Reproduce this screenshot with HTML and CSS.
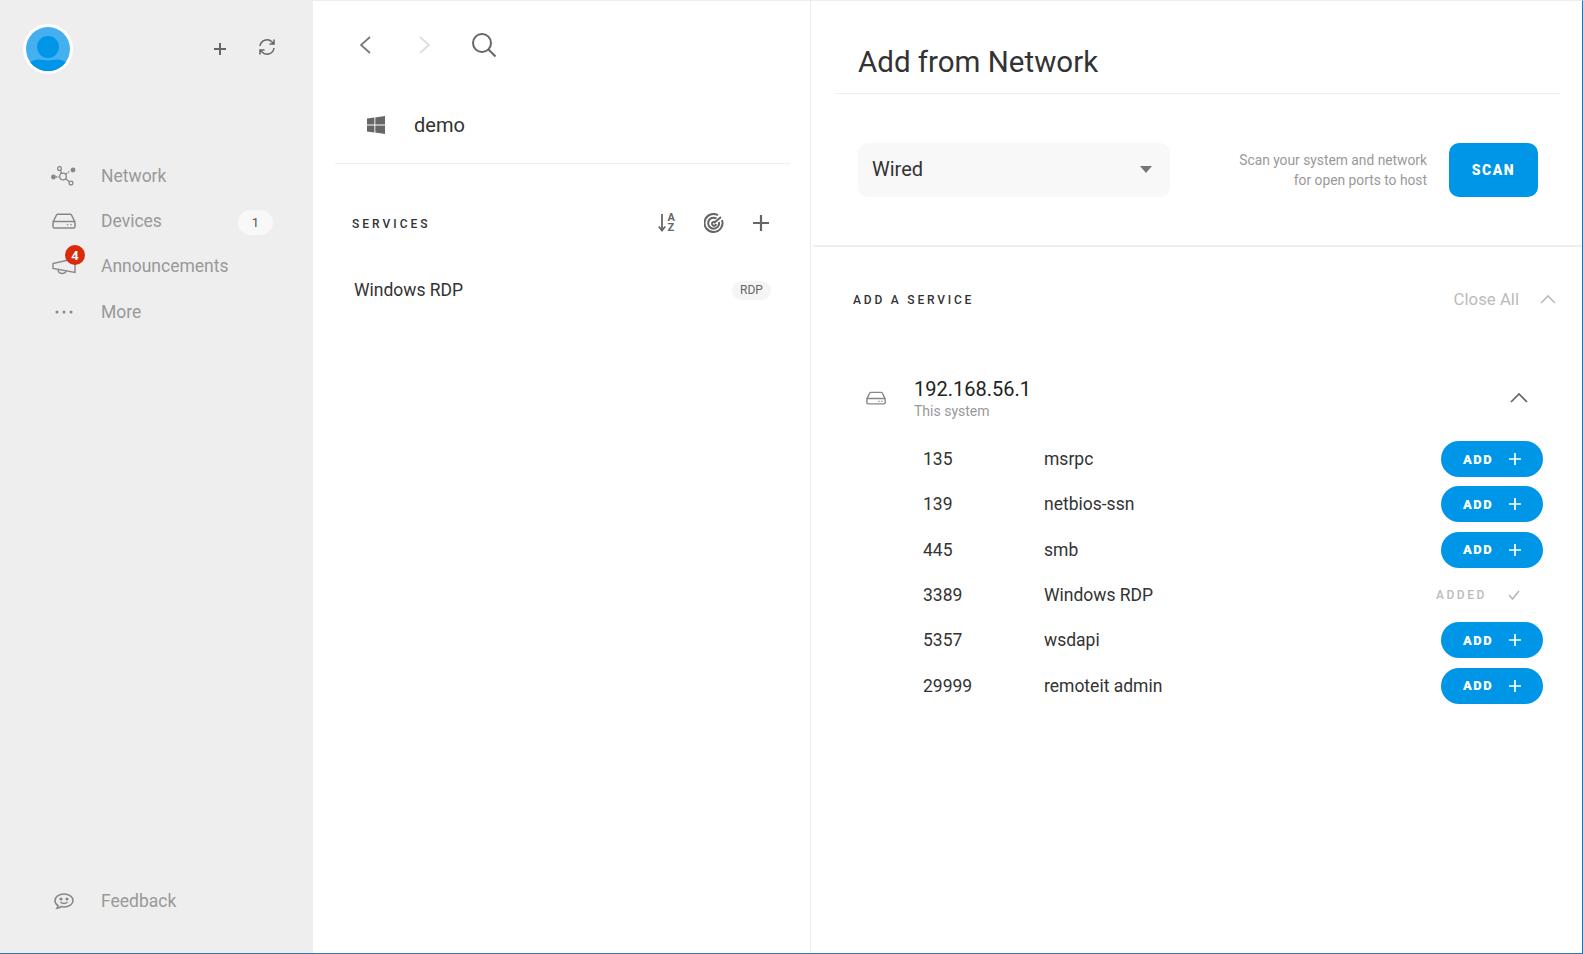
FILE: index.html
```html
<!DOCTYPE html>
<html lang="en">
<head>
<meta charset="utf-8">
<title>Add from Network</title>
<link rel="stylesheet" href="styles.css">
</head>
<body>
<div class="app">
  <aside class="sidebar">
    <div class="side-top">
      <div class="avatar">
        <svg viewBox="0 0 44 44" width="44" height="44"><circle cx="22" cy="22" r="22" fill="#45b0f0"/><circle cx="22" cy="20" r="11" fill="#0096e7"/><path d="M4 35c5-3 10-3 14-2 3 .6 5 .6 8 0 4-1 9-1 14 2a22 22 0 0 1-36 0z" fill="#0096e7"/></svg>
      </div>
      <div class="side-actions">
        <svg class="ic-plus" viewBox="0 0 14 14" width="14" height="14"><path d="M7 1v12M1 7h12" stroke="#666" stroke-width="2"/></svg>
        <svg viewBox="0 0 18 18" width="18" height="18" fill="none" stroke="#666" stroke-width="1.500"><path d="M2 8a7 7 0 0 1 12-4l2 2M16 1.500V6h-4.500M16 10a7 7 0 0 1-12 4l-2-2M2 16.500V12h4.500"/></svg>
      </div>
    </div>
    <nav class="nav">
      <div class="nav-row">
        <span class="nav-ic"><svg viewBox="0 0 26 20" width="26" height="20" fill="none" stroke="#888" stroke-width="1.300"><circle cx="2.500" cy="11" r="1.800" fill="#888"/><path d="M5 11h3" stroke-dasharray="1.500 1"/><circle cx="12" cy="10.500" r="3.300"/><circle cx="8.500" cy="2.500" r="1.900"/><path d="M9.500 4.500l1 3M14.500 12.500l3.500 3"/><circle cx="20" cy="17" r="1.900"/><path d="M15 8l4-3" stroke-dasharray="1.500 1"/><circle cx="22" cy="4" r="1.800" fill="#888"/></svg></span>
        <span class="nav-label">Network</span>
      </div>
      <div class="nav-row">
        <span class="nav-ic"><svg viewBox="0 0 24 16" width="24" height="16" fill="none" stroke="#888" stroke-width="1.500"><path d="M1 9l3.500-7a1.500 1.500 0 0 1 1.300-.8h12.400a1.500 1.500 0 0 1 1.300.8L23 9"/><rect x="1" y="8.500" width="22" height="6.500" rx="1.500"/><circle cx="15.500" cy="11.800" r=".8" fill="#888" stroke="none"/><circle cx="19" cy="11.800" r=".8" fill="#888" stroke="none"/></svg></span>
        <span class="nav-label">Devices</span>
        <span class="count">1</span>
      </div>
      <div class="nav-row">
        <span class="nav-ic"><svg viewBox="0 0 24 18" width="24" height="18" fill="none" stroke="#888" stroke-width="1.400"><path d="M1 6.500v5l22 4V1.500zM6 12.500c0 5 8 5 8 1.500"/></svg><span class="badge">4</span></span>
        <span class="nav-label">Announcements</span>
      </div>
      <div class="nav-row">
        <span class="nav-ic"><svg viewBox="0 0 18 4" width="18" height="4" fill="#888"><circle cx="2" cy="2" r="1.500"/><circle cx="9" cy="2" r="1.500"/><circle cx="16" cy="2" r="1.500"/></svg></span>
        <span class="nav-label">More</span>
      </div>
    </nav>
    <div class="nav-row feedback">
      <span class="nav-ic"><svg viewBox="0 0 20 18" width="20" height="18" fill="none" stroke="#888" stroke-width="1.600"><path d="M4 13.500C2 12.300 1 10.700 1 8.700 1 4.700 5 2 10 2s9 2.700 9 6.500-4 6.500-9 6.500c-1 0-2-.1-3-.4-1 1-2.500 1.600-4 1.700.6-.8 1-1.700 1-2.800z"/><circle cx="7" cy="7" r=".8" fill="#888"/><circle cx="13" cy="7" r=".8" fill="#888"/><path d="M6.500 10c1.800 2 5.200 2 7 0"/></svg></span>
      <span class="nav-label">Feedback</span>
    </div>
  </aside>

  <section class="middle">
    <div class="mid-nav">
      <svg class="back" viewBox="0 0 14 20" width="14" height="20" fill="none" stroke="#777" stroke-width="1.700"><path d="M12 2L3 10l9 8"/></svg>
      <svg class="fwd" viewBox="0 0 14 20" width="14" height="20" fill="none" stroke="#ddd" stroke-width="1.700"><path d="M2 2l9 8-9 8"/></svg>
      <svg class="search" viewBox="0 0 26 26" width="26" height="26" fill="none" stroke="#666" stroke-width="2"><circle cx="11" cy="11" r="9"/><path d="M17.500 17.500l7 7"/></svg>
    </div>
    <div class="device">
      <svg class="win" viewBox="0 0 18 18" width="18" height="18" fill="#666"><path d="M0 2.600l7.400-1v7H0zM8.300 1.400L18 0v8.600H8.300zM0 9.400h7.400v7L0 15.400zM8.300 9.400H18V18l-9.700-1.400z"/></svg>
      <span class="device-name">demo</span>
    </div>
    <div class="svc-head">
      <span class="caps caps-svc">SERVICES</span>
      <div class="svc-tools">
        <span class="tool sort"><svg viewBox="0 0 8 18" width="8" height="18" fill="none" stroke="#666" stroke-width="1.800"><path d="M4 0v16M.8 12.500L4 16.500l3.200-4"/></svg><span class="sort-az">A<br>Z</span></span>
        <span class="tool"><svg viewBox="0 0 20 20" width="20" height="20" fill="none" stroke="#666" stroke-width="2"><path d="M14 2.200A9 9 0 1 0 18 7"/><path d="M12.500 5.500A5.500 5.500 0 1 0 15 9"/><path d="M11 9a2 2 0 1 0 1 2M10 10l7-6"/></svg></span>
        <span class="tool"><svg viewBox="0 0 16 16" width="16" height="16"><path d="M8 0v16M0 8h16" stroke="#666" stroke-width="2.200"/></svg></span>
      </div>
    </div>
    <div class="svc-row">
      <span class="svc-name">Windows RDP</span>
      <span class="chip">RDP</span>
    </div>
  </section>

  <section class="right">
    <div class="r-title"><h1>Add from Network</h1></div>
    <div class="scan-bar">
      <div class="select"><span>Wired</span><i class="caret"></i></div>
      <p class="scan-note">Scan your system and network<br>for open ports to host</p>
      <button class="scan-btn">SCAN</button>
    </div>
    <div class="add-head">
      <span class="caps caps-wide">ADD A SERVICE</span>
      <div class="close-all">
        <span>Close All</span>
        <svg viewBox="0 0 16 10" width="16" height="10" fill="none" stroke="#bbb" stroke-width="1.600"><path d="M1 9l7-7 7 7"/></svg>
      </div>
    </div>
    <div class="host">
      <svg class="host-ic" viewBox="0 0 24 16" width="20" height="14" fill="none" stroke="#888" stroke-width="1.700"><path d="M1 9l3.500-7a1.500 1.500 0 0 1 1.300-.8h12.400a1.500 1.500 0 0 1 1.300.8L23 9"/><rect x="1" y="8.500" width="22" height="6.500" rx="1.500"/><circle cx="15.500" cy="11.800" r=".9" fill="#888" stroke="none"/><circle cx="19" cy="11.800" r=".9" fill="#888" stroke="none"/></svg>
      <div class="host-text">
        <div class="host-ip">192.168.56.1</div>
        <div class="host-sub">This system</div>
      </div>
      <svg class="host-chev" viewBox="0 0 18 11" width="18" height="11" fill="none" stroke="#666" stroke-width="1.700"><path d="M1 10l8-8 8 8"/></svg>
    </div>
    <div class="ports">
      <div class="port"><span class="num">135</span><span class="pname">msrpc</span><button class="add">ADD<svg viewBox="0 0 14 14" width="14" height="14"><path d="M7 1v12M1 7h12" stroke="#fff" stroke-width="1.700"/></svg></button></div>
      <div class="port"><span class="num">139</span><span class="pname">netbios-ssn</span><button class="add">ADD<svg viewBox="0 0 14 14" width="14" height="14"><path d="M7 1v12M1 7h12" stroke="#fff" stroke-width="1.700"/></svg></button></div>
      <div class="port"><span class="num">445</span><span class="pname">smb</span><button class="add">ADD<svg viewBox="0 0 14 14" width="14" height="14"><path d="M7 1v12M1 7h12" stroke="#fff" stroke-width="1.700"/></svg></button></div>
      <div class="port"><span class="num">3389</span><span class="pname">Windows RDP</span><span class="added">ADDED<svg viewBox="0 0 12 10" width="12" height="10" fill="none" stroke="#aaa" stroke-width="1.200"><path d="M1 5l3.500 4L11 1"/></svg></span></div>
      <div class="port"><span class="num">5357</span><span class="pname">wsdapi</span><button class="add">ADD<svg viewBox="0 0 14 14" width="14" height="14"><path d="M7 1v12M1 7h12" stroke="#fff" stroke-width="1.700"/></svg></button></div>
      <div class="port"><span class="num">29999</span><span class="pname">remoteit admin</span><button class="add">ADD<svg viewBox="0 0 14 14" width="14" height="14"><path d="M7 1v12M1 7h12" stroke="#fff" stroke-width="1.700"/></svg></button></div>
    </div>
  </section>
</div>
</body>
</html>
```
FILE: styles.css
```css
* { box-sizing: border-box; }
html, body { margin: 0; height: 100%; overflow: hidden; }
body { font-family: Roboto, "Liberation Sans", sans-serif; color: #222; background: #fff; }
.app {
  display: flex;
  height: 954px;
  border-top: 1px solid #eee;
  border-bottom: 1px solid #2f78a8;
  border-right: 1px solid #2f6fa8;
}
.sidebar { width: 313px; flex: none; background: #eee; display: flex; flex-direction: column; }
.side-top { display: flex; align-items: center; justify-content: space-between; padding: 23px 37px 0 23px; }
.avatar { width: 50px; height: 50px; border-radius: 50%; background: #fff; padding: 3px; }
.avatar svg { display: block; }
.side-actions { display: flex; align-items: center; gap: 31px; margin-top: -4px; }
.side-actions svg { display: block; }
.side-actions .ic-plus { margin-top: 4px; }
.nav { margin-top: 79px; }
.nav-row { display: flex; align-items: center; height: 45.3px; padding-left: 51px; }
.nav-ic { position: relative; width: 26px; height: 20px; display: flex; align-items: center; justify-content: center; margin-right: 24px; }
.nav-label { font-size: 17.500px; color: #999; flex: 1; }
.count { width: 35px; height: 25px; margin: 3px 40px 0 0; border-radius: 13px; background: #f8f8f8; font-size: 13px; color: #555; display: flex; align-items: center; justify-content: center; }
.badge { position: absolute; left: 14px; top: -11px; width: 20px; height: 20px; border-radius: 50%; background: #d92a0c; color: #fff; font-size: 13px; font-weight: 700; display: flex; align-items: center; justify-content: center; }
.feedback { margin-top: auto; margin-bottom: 29px; }

.middle { width: 498px; flex: none; border-right: 1px solid #eee; padding: 0 20px 0 22px; }
.mid-nav { display: flex; align-items: center; height: 61px; padding-left: 23px; padding-top: 27px; }
.back { margin-right: 46px; }
.fwd { margin-right: 39px; }
.device { display: flex; align-items: center; height: 102px; padding: 24px 0 0 32px; border-bottom: 1px solid #eee; }
.win { margin-right: 29px; }
.device-name { font-size: 20px; color: #333; }
.caps { font-size: 12px; letter-spacing: 3px; font-weight: 500; color: #333; }
.caps-svc { padding-top: 2px; }
.caps-wide { letter-spacing: 2.800px; }
.svc-head { display: flex; align-items: center; justify-content: space-between; padding: 0 0 0 17px; height: 60px; margin-top: 29px; }
.svc-tools { display: flex; align-items: center; padding-right: 5px; }
.tool { display: flex; width: 47.500px; justify-content: center; align-items: center; gap: 2px; }
.sort { position: relative; }
.sort-az { font-size: 11px; line-height: 10px; font-weight: 700; color: #666; }
.svc-row { display: flex; align-items: center; justify-content: space-between; padding: 0 19px 0 19px; height: 60px; margin-top: 7px; }
.svc-name { font-size: 17.500px; color: #333; }
.chip { width: 39px; height: 19px; border-radius: 10px; background: #f5f5f5; font-size: 12px; color: #666; display: flex; align-items: center; justify-content: center; }

.right { flex: 1; min-width: 0; }
.r-title { margin: 0 22px 0 24px; height: 93px; border-bottom: 1px solid #eee; padding: 43px 0 0 23px; }
h1 { margin: 0; font-size: 29.500px; font-weight: 400; line-height: 34px; color: #333; margin-top: 1px; }
.scan-bar { display: flex; align-items: center; height: 153px; margin-left: 2px; padding: 0 44px 0 45px; border-bottom: 2px solid #eee; }
.select { width: 312px; height: 54px; border-radius: 10px; background: #f8f8f8; display: flex; align-items: center; justify-content: space-between; padding: 0 18px 2px 14px; font-size: 20px; color: #333; }
.caret { width: 0; height: 0; margin-top: 2px; border: 6.500px solid transparent; border-top: 7px solid #777; border-bottom: 0; }
.scan-note { flex: 1; margin: 0 22px 0 0; text-align: right; font-size: 13.800px; line-height: 20px; color: #999; }
.scan-btn { width: 89px; height: 54px; border: 0; border-radius: 10px; background: #0096e7; color: #fff; font: 900 14px Roboto, sans-serif; letter-spacing: 1.500px; }
.add-head { display: flex; align-items: center; justify-content: space-between; height: 30px; margin-top: 38px; padding: 0 26px 0 42px; }
.close-all { display: flex; align-items: center; gap: 21px; margin-top: -2px; font-size: 16.800px; color: #bbb; }
.host { display: flex; align-items: center; margin-top: 58px; padding: 0 54px 0 55px; height: 50px; }
.host-ic { flex: none; margin-right: 28px; }
.host-text { flex: 1; }
.host-ip { font-size: 20px; line-height: 26px; color: #222; }
.host-sub { font-size: 14px; line-height: 18px; color: #999; }
.host-chev { margin-top: -2px; }
.ports { margin-top: 13.400px; padding: 0 39px 0 112px; }
.port { display: flex; align-items: center; height: 45.300px; font-size: 17.500px; color: #333; }
.num { width: 121px; }
.pname { flex: 1; }
.add { width: 102px; height: 36px; border: 0; border-radius: 18px; background: #0096e7; color: #fff; font: 900 13px Roboto, sans-serif; letter-spacing: 1.500px; display: flex; align-items: center; justify-content: space-between; padding: 0 21px 0 22px; }
.added { width: 107px; display: flex; align-items: center; justify-content: space-between; padding-right: 23px; font-size: 12px; font-weight: 500; letter-spacing: 2.500px; color: #bbb; }
```
